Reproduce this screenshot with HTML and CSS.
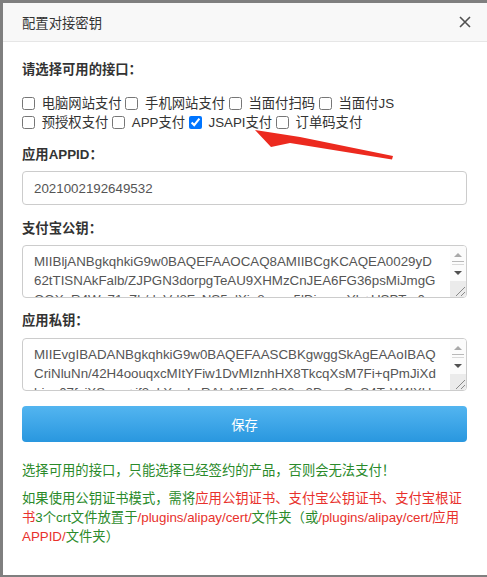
FILE: index.html
```html
<!DOCTYPE html>
<html lang="zh-CN">
<head>
<meta charset="utf-8">
<title>配置对接密钥</title>
<link rel="stylesheet" href="styles.css">
</head>
<body>
<div class="modal">
  <div class="modal-header">
    <span class="modal-title">配置对接密钥</span>
    <span class="close" aria-label="关闭">
      <svg width="12" height="12" viewBox="0 0 12 12"><path d="M1 1L11 11M11 1L1 11" stroke="#505050" stroke-width="1.6" fill="none"/></svg>
    </span>
  </div>
  <div class="modal-body">
    <div class="section-title">请选择可用的接口：</div>
    <div class="checks">
      <label class="chk"><input type="checkbox"> 电脑网站支付</label>
      <label class="chk"><input type="checkbox"> 手机网站支付</label>
      <label class="chk"><input type="checkbox"> 当面付扫码</label>
      <label class="chk"><input type="checkbox"> 当面付JS</label>
      <label class="chk"><input type="checkbox"> 预授权支付</label>
      <label class="chk"><input type="checkbox"> APP支付</label>
      <label class="chk"><input type="checkbox" checked> JSAPI支付</label>
      <label class="chk"><input type="checkbox"> 订单码支付</label>
    </div>
    <div class="field">
      <div class="field-label">应用APPID：</div>
      <input class="text-input" type="text" value="2021002192649532">
    </div>
    <div class="field field-ta1">
      <div class="field-label">支付宝公钥：</div>
      <div class="ta-wrap">
        <textarea class="text-area">MIIBljANBgkqhkiG9w0BAQEFAAOCAQ8AMIIBCgKCAQEA0029yD62tTISNAkFalb/ZJPGN3dorpgTeAU9XHMzCnJEA6FG36psMiJmgGOQXaR4Wa71vZh/dqVd8FvNS5alXia8eeev5lDizwuvYb+USPTm0nT</textarea>
        <div class="sb">
          <div class="sb-btn"><span class="tri-up"></span></div>
          <div class="sb-thumb"></div>
          <div class="sb-btn"><span class="tri-down"></span></div>
          <div class="sb-corner"><svg width="16" height="16" viewBox="0 0 16 16"><path d="M6 15L15 6M11 15L15 11" stroke="#8a8a8a" stroke-width="1" fill="none"/></svg></div>
        </div>
      </div>
    </div>
    <div class="field field-ta2">
      <div class="field-label label-ta2">应用私钥：</div>
      <div class="ta-wrap">
        <textarea class="text-area">MIIEvgIBADANBgkqhkiG9w0BAQEFAASCBKgwggSkAgEAAoIBAQCriNluNn/42H4oouqxcMItYFiw1DvMIznhHX8TkcqXsM7Fi+qPmJiXdhiue07fsiXSeqp+if3ekXuaLzRALAIFAFv8S6m2DrxwOvS4TsW4lXU</textarea>
        <div class="sb">
          <div class="sb-btn"><span class="tri-up"></span></div>
          <div class="sb-thumb"></div>
          <div class="sb-btn"><span class="tri-down"></span></div>
          <div class="sb-corner"><svg width="16" height="16" viewBox="0 0 16 16"><path d="M6 15L15 6M11 15L15 11" stroke="#8a8a8a" stroke-width="1" fill="none"/></svg></div>
        </div>
      </div>
    </div>
    <button class="btn-save" type="button">保存</button>
    <p class="tip">选择可用的接口，只能选择已经签约的产品，否则会无法支付！</p>
    <p class="note">如果使用公钥证书模式，需将<span class="red">应用公钥证书、支付宝公钥证书、支付宝根证书</span>3个crt文件放置于<span class="red">/plugins/alipay/cert/</span>文件夹（或<span class="red">/plugins/alipay/cert/应用APPID/</span>文件夹）</p>
  </div>
</div>
<svg class="arrow" width="487" height="577" viewBox="0 0 487 577">
  <polygon points="255,130 300,137 393,156 392,159.5 290,143 271,147" fill="#ec2a1f"/>
</svg>
</body>
</html>
```
FILE: styles.css
```css
html, body {
  margin: 0;
  height: 100%;
  overflow: hidden;
}
body {
  background: #7f7f7f;
  font-family: "Liberation Sans", "Noto Sans CJK SC", sans-serif;
  font-size: 13.33px;
  color: #333;
  position: relative;
}
.modal {
  margin: 3px 0 0 3px;
  width: 484px;
  height: 572px;
  background: #fff;
}
.modal-header {
  height: 38px;
  border-bottom: 1px solid #e6e6e6;
  background: #f8f8f8;
  display: flex;
  align-items: center;
  justify-content: space-between;
  padding: 0 16px 0 19px;
}
.modal-title {
  color: #333;
}
.close {
  display: flex;
  width: 12px;
  height: 12px;
}
.modal-body {
  padding: 18px 20px 0 19px;
}
.section-title {
  font-weight: bold;
  line-height: 20px;
  margin-bottom: 14px;
}
.checks {
  line-height: 19px;
  margin-bottom: 13px;
}
.chk {
  white-space: nowrap;
}
.chk input {
  width: 13px;
  height: 13px;
  margin: 0 3px 0 0;
  vertical-align: -2px;
}
.field-label {
  font-weight: bold;
  line-height: 20px;
  margin-bottom: 6px;
}
.field {
  margin-bottom: 14px;
}
.field-ta1 {
  margin-bottom: 13px;
}
.field-ta2 {
  margin-bottom: 15px;
}
.label-ta2 {
  margin-bottom: 7px;
}
.text-input {
  display: block;
  box-sizing: border-box;
  width: 100%;
  height: 34px;
  border: 1px solid #ccc;
  border-radius: 4px;
  padding: 0 11px;
  font-family: inherit;
  font-size: 13.33px;
  color: #555;
  outline: none;
}
.ta-wrap {
  position: relative;
}
.text-area {
  display: block;
  box-sizing: border-box;
  width: 100%;
  height: 53px;
  border: 1px solid #ccc;
  border-radius: 4px;
  padding: 6px 27.5px 6px 11px;
  font-family: inherit;
  font-size: 13.33px;
  line-height: 19px;
  color: #555;
  overflow: hidden;
  word-break: break-all;
  resize: none;
  outline: none;
}
.sb {
  position: absolute;
  top: 1px;
  right: 1px;
  bottom: 1px;
  width: 16px;
  display: flex;
  flex-direction: column;
  background: #fbfbfb;
  border-radius: 0 3px 3px 0;
  overflow: hidden;
}
.sb-btn {
  height: 15px;
  display: flex;
  align-items: center;
  justify-content: center;
}
.tri-up {
  width: 0;
  height: 0;
  border-left: 4px solid transparent;
  border-right: 4px solid transparent;
  border-bottom: 4px solid #a8a8a8;
  margin-top: 2px;
}
.tri-down {
  width: 0;
  height: 0;
  border-left: 4px solid transparent;
  border-right: 4px solid transparent;
  border-top: 4px solid #505050;
}
.sb-thumb {
  height: 4px;
  margin: 0 2px;
  border-top: 1px solid #b8b8b8;
  border-bottom: 1px solid #d8d8d8;
  box-sizing: border-box;
}
.sb-corner {
  margin-top: auto;
  height: 16px;
  background: #ebebeb;
  display: flex;
}
.btn-save {
  display: block;
  width: 100%;
  height: 36px;
  border: none;
  border-radius: 4px;
  background: linear-gradient(#53b5f0, #2997df);
  color: #fff;
  font-family: inherit;
  font-size: 13.33px;
  cursor: pointer;
}
.tip {
  margin: 19px 0 9px;
  line-height: 19px;
  color: #2a8a2a;
}
.note {
  margin: 0;
  line-height: 19px;
  color: #2a8a2a;
}
.red {
  color: #e8312c;
}
.arrow {
  position: absolute;
  left: 0;
  top: 0;
  pointer-events: none;
}
```
